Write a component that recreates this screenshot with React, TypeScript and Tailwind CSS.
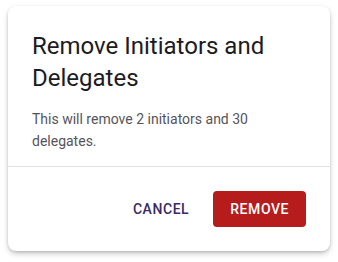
export default function App() {
  return (
    <div className="flex min-h-[262px] w-full justify-center bg-white pt-[6px]" style={{ fontFamily: "Roboto, 'Liberation Sans', sans-serif" }}>
      <div className="h-fit w-[322px] rounded-lg bg-white shadow-[0_3px_6px_-1px_rgba(0,0,0,0.25),0_1px_3px_rgba(0,0,0,0.12)]">
        <div className="px-6 pt-6 pb-[14px]">
          <h2 className="text-2xl leading-8 font-normal text-[#1c1b1f]">Remove Initiators and Delegates</h2>
          <p className="mt-[14px] text-sm leading-[22px] text-[#56545a]">This will remove 2 initiators and 30 delegates.</p>
        </div>
        <div className="h-px bg-[#e2dfe6]" />
        <div className="flex items-center justify-end gap-6 p-6">
          <button className="text-sm font-medium tracking-[0.04em] text-[#3b2a63]">CANCEL</button>
          <button className="h-9 rounded bg-[#b71c1c] px-[17px] text-sm font-medium tracking-[0.04em] text-white">REMOVE</button>
        </div>
      </div>
    </div>
  );
}
